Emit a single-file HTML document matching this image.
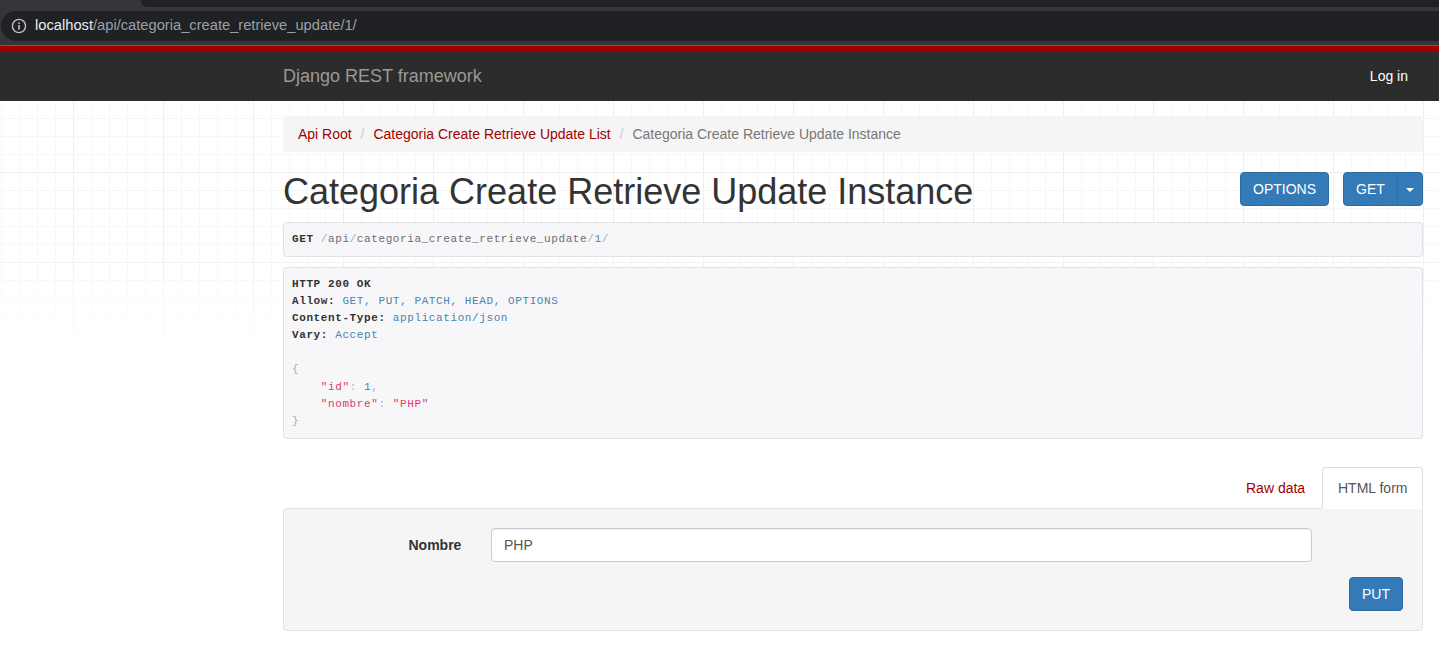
<!DOCTYPE html>
<html>
<head>
<meta charset="utf-8">
<style>
*{box-sizing:border-box;}
html,body{margin:0;padding:0;width:1439px;height:654px;overflow:hidden;background:#fff;}
body{font-family:"Liberation Sans",sans-serif;font-size:14px;line-height:1.42857143;color:#333;position:relative;}
.abs{position:absolute;}
/* browser chrome */
#chrome{position:absolute;left:0;top:0;width:1439px;height:46px;background:#35363a;}
#tabstrip{position:absolute;left:141px;top:0;width:1298px;height:7px;background:#202124;border-bottom-left-radius:6px;}
#omni{position:absolute;left:1px;top:11px;width:1450px;height:30px;background:#202124;border-radius:15px;}
#chromeline{position:absolute;left:0;top:45px;width:1439px;height:1px;background:#5f6063;}
#url{position:absolute;left:35px;top:16px;font-size:14.7px;line-height:18px;color:#9aa0a6;white-space:nowrap;}
#url b{font-weight:normal;color:#e8eaed;}
/* page */
#grid{position:absolute;left:0;top:46px;width:1439px;height:310px;-webkit-mask-image:linear-gradient(to bottom,#000 0,#000 205px,rgba(0,0,0,.12) 305px,transparent 306px);}
#navbar{position:absolute;left:0;top:46px;width:1439px;height:55px;background:#2c2c2c;border-top:5px solid #a30000;}
#brand{position:absolute;left:283px;top:15px;font-size:18px;line-height:20px;color:#999;}
#login{position:absolute;right:31px;top:15px;font-size:14px;line-height:20px;color:#fff;}
#crumb{position:absolute;left:283px;top:116px;width:1140px;height:36px;background:#f5f5f5;border-radius:4px;padding:8px 15px;line-height:20px;white-space:nowrap;}
#crumb a{color:#a30000;text-decoration:none;}
#crumb .sep{color:#ccc;padding:0 5px;}
#crumb .act{color:#777;}
h1{position:absolute;left:283px;top:172px;margin:0;font-size:36px;line-height:39.6px;font-weight:normal;color:#333;white-space:nowrap;}
.btn{position:absolute;display:block;height:34px;background:#337ab7;border:1px solid #2e6da4;color:#fff;font-size:14px;line-height:20px;padding:6px 12px;border-radius:4px;text-align:center;white-space:nowrap;}
pre{position:absolute;margin:0;font-family:"Liberation Mono",monospace;font-size:11px;letter-spacing:0.6px;line-height:17.142857px;padding:8px;background:#f7f7f9;border:1px solid #e1e1e8;border-radius:4px;color:#333;white-space:pre;}
pre b{font-weight:bold;}
.lit{color:#4b83ad;}
.str{color:#e03a6c;}
.pun{color:#a3afaf;}
.pln{color:#6c6c70;}
#tabs{position:absolute;left:283px;top:467px;width:1140px;height:42px;z-index:2;}
#tab-html{position:absolute;left:1039px;top:0;width:101px;height:42px;z-index:2;background:#fff;border:1px solid #ddd;border-bottom-color:transparent;border-radius:4px 4px 0 0;padding:10px 15px;line-height:20px;color:#555;white-space:nowrap;}
#tab-raw{position:absolute;left:948px;top:1px;height:41px;padding:10px 15px 10px 15px;line-height:20px;color:#a30000;white-space:nowrap;}
#well{position:absolute;left:283px;top:508px;width:1140px;height:123px;background:#f5f5f5;border:1px solid #e3e3e3;border-radius:0 0 4px 4px;border-top-left-radius:4px;}
#label{position:absolute;left:408.5px;top:535px;font-weight:bold;line-height:20px;}
#input{position:absolute;left:491px;top:528px;width:821px;height:34px;background:#fff;border:1px solid #ccc;border-radius:4px;padding:6px 12px;line-height:20px;color:#555;box-shadow:inset 0 1px 1px rgba(0,0,0,.075);}
</style>
</head>
<body>
<div id="chrome">
  <div id="tabstrip"></div>
  <div id="omni"></div>
  <svg class="abs" style="left:11px;top:18px" width="16" height="16" viewBox="0 0 16 16">
    <circle cx="8" cy="8" r="6.6" fill="none" stroke="#bdc1c6" stroke-width="1.4"/>
    <rect x="7.2" y="7" width="1.6" height="4.6" fill="#bdc1c6"/>
    <rect x="7.2" y="4.4" width="1.6" height="1.6" fill="#bdc1c6"/>
  </svg>
  <div id="url"><b>localhost</b>/api/categoria_create_retrieve_update/1/</div>
  <div id="chromeline"></div>
</div>
<svg id="grid" width="1439" height="310" viewBox="0 0 1439 310">
 <defs>
  <pattern id="pmin" width="18" height="18" patternUnits="userSpaceOnUse" x="1" y="0">
   <rect x="0" y="1" width="1" height="17" fill="#f6f6f6"/>
   <rect x="1" y="0" width="17" height="1" fill="#f6f6f6"/>
  </pattern>
  <pattern id="pmajv" width="90" height="18" patternUnits="userSpaceOnUse" x="73" y="0">
   <rect x="0" y="1" width="1" height="17" fill="#eeeeee"/>
  </pattern>
  <pattern id="pmajh" width="18" height="90" patternUnits="userSpaceOnUse" x="1" y="36">
   <rect x="1" y="0" width="17" height="1" fill="#eeeeee"/>
  </pattern>
 </defs>
 <rect width="1439" height="310" fill="url(#pmin)"/>
 <rect width="1439" height="310" fill="url(#pmajv)"/>
 <rect width="1439" height="310" fill="url(#pmajh)"/>
</svg>
<div id="navbar">
  <div id="brand">Django REST framework</div>
  <div id="login">Log in</div>
</div>

<div id="crumb"><a href="#">Api Root</a> <span class="sep">/&nbsp;</span><a href="#">Categoria Create Retrieve Update List</a> <span class="sep">/&nbsp;</span><span class="act">Categoria Create Retrieve Update Instance</span></div>

<h1>Categoria Create Retrieve Update Instance</h1>

<div class="btn" style="left:1240px;top:172px;width:89px;">OPTIONS</div>
<div class="btn" style="left:1343px;top:172px;width:55px;border-top-right-radius:0;border-bottom-right-radius:0;">GET</div>
<div class="btn" style="left:1397px;top:172px;width:26px;border-top-left-radius:0;border-bottom-left-radius:0;padding:0;">
  <span style="position:absolute;left:8px;top:15px;width:0;height:0;border-top:4px solid #fff;border-left:4px solid transparent;border-right:4px solid transparent;"></span>
</div>

<pre style="left:283px;top:221.6px;width:1140px;height:35.14px;"><b>GET</b><span class="pln"> </span><span class="pun">/</span><span class="pln">api</span><span class="pun">/</span><span class="pln">categoria_create_retrieve_update</span><span class="pun">/</span><span class="lit">1</span><span class="pun">/</span></pre>

<pre style="left:283px;top:266.74px;width:1140px;height:172.29px;"><b>HTTP 200 OK</b>
<b>Allow:</b> <span class="lit">GET, PUT, PATCH, HEAD, OPTIONS</span>
<b>Content-Type:</b> <span class="lit">application/json</span>
<b>Vary:</b> <span class="lit">Accept</span>

<span class="pun">{</span>
<span class="pln">    </span><span class="str">"id"</span><span class="pun">:</span><span class="pln"> </span><span class="lit">1</span><span class="pun">,</span>
<span class="pln">    </span><span class="str">"nombre"</span><span class="pun">:</span><span class="pln"> </span><span class="str">"PHP"</span>
<span class="pun">}</span></pre>

<div id="tabs">
  <div id="tab-raw">Raw data</div>
  <div id="tab-html">HTML form</div>
</div>
<div id="well"></div>
<div id="label">Nombre</div>
<div id="input">PHP</div>
<div class="btn" style="left:1349px;top:577px;width:54px;">PUT</div>
</body>
</html>
